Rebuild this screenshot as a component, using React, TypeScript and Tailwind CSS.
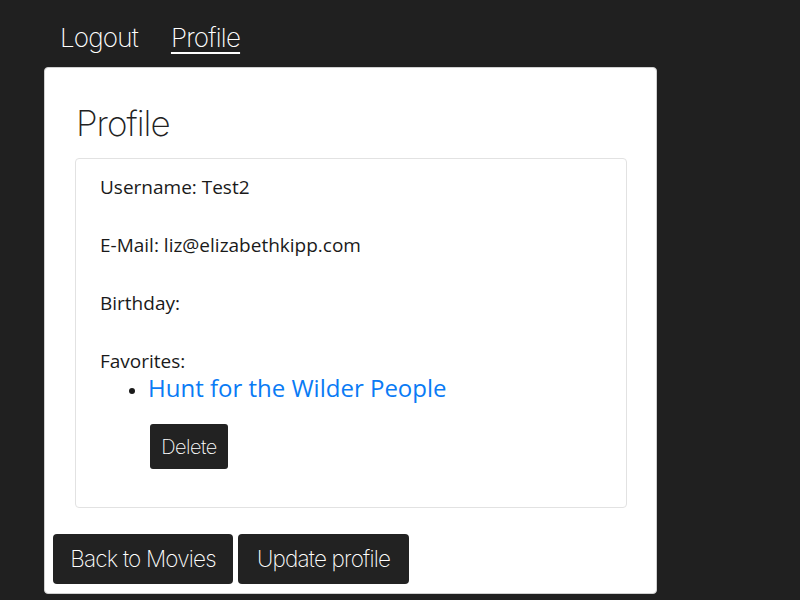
import React from "react";

const thin = { fontFamily: "Inter, 'Noto Sans', sans-serif" };

export default function App() {
  return (
    <div className="min-h-[600px] w-[800px] bg-[#202020] overflow-hidden" style={{ fontFamily: "'Open Sans', sans-serif" }}>
      <nav className="flex gap-[33px] pl-[60px] pt-[20px] h-[67px] text-white text-[26px] font-extralight tracking-[-0.8px]" style={thin}>
        <span className="leading-[36px]">Logout</span>
        <span className="leading-[36px] underline underline-offset-[5px] decoration-[2px]">Profile</span>
      </nav>
      <div className="ml-[44px] w-[613px] h-[527px] bg-white rounded-[4px] border border-[#d0d0d0] flex flex-col">
        <h1 className="ml-[31px] mt-[33px] text-[35px] leading-[44px] font-extralight text-[#222] tracking-[-1px]" style={thin}>Profile</h1>
        <div className="ml-[30px] mt-[13px] w-[552px] h-[350px] border border-[#e2e2e2] rounded-[4px] pl-[24px] pt-[14px] text-[19px] text-[#1a1a1a]">
          <p className="leading-[28px] mb-[30px]">Username: Test2</p>
          <p className="leading-[28px] mb-[30px]">E-Mail: liz@elizabethkipp.com</p>
          <p className="leading-[28px] mb-[30px]">Birthday:</p>
          <p className="leading-[28px]">Favorites:</p>
          <ul className="list-disc pl-[48px] -mt-[2px] marker:text-[#1a1a1a] marker:text-[18px]">
            <li className="text-[24px] leading-[30px] text-[#0a7bf5]">Hunt for the Wilder People</li>
          </ul>
          <button className="ml-[50px] mt-[21px] h-[45px] w-[78px] bg-[#222] text-white rounded-[3px] text-[20px] font-extralight tracking-[-0.5px]" style={thin}>Delete</button>
        </div>
        <div className="flex gap-[5px] ml-[8px] mt-[26px]">
          <button className="h-[50px] w-[180px] bg-[#222] text-white rounded-[4px] text-[22.5px] font-extralight tracking-[-0.8px]" style={thin}>Back to Movies</button>
          <button className="h-[50px] w-[171px] bg-[#222] text-white rounded-[4px] text-[22.5px] font-extralight tracking-[-0.8px]" style={thin}>Update profile</button>
        </div>
      </div>
    </div>
  );
}
